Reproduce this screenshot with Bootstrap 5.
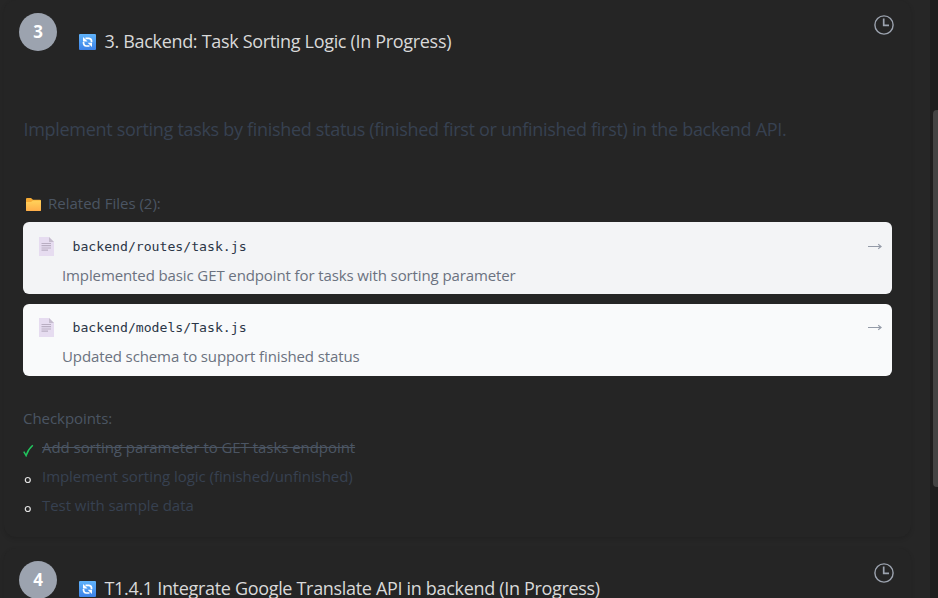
<!DOCTYPE html>
<html lang="en">
<head>
<meta charset="utf-8">
<title>Task timeline</title>
<link href="https://cdn.jsdelivr.net/npm/bootstrap@5.3.0/dist/css/bootstrap.min.css" rel="stylesheet">
<style>
html, body { height: 598px; overflow: hidden; }
body { background: #262626; font-family: "Open Sans", "Noto Sans", sans-serif; color: #d9d9d9; }
.timeline { width: 930px; height: 598px; }
.track { width: 8px; height: 598px; background: #1e1e1e; padding: 110px 0 0 3px; }
.thumb { width: 10px; height: 377px; background: #434343; border-radius: 4px; }
.task { width: 907px; margin-left: 4px; border-radius: 12px; background: #252525; box-shadow: 0 2px 4px rgba(0,0,0,.13); padding: 0 19px; }
.task-first { height: 537px; }
.task-next { height: 200px; margin-top: 11px; }
.task-head { height: 115px; padding-top: 13px; margin-left: -4px; }
.num { width: 38px; height: 38px; background: #9ca3af; color: #fff; font-weight: 700; font-size: 17px; flex: none; }
.task-title { font-size: 18px; line-height: 24px; margin: 16px 0 0 22px; letter-spacing: -.32px; white-space: nowrap; }
.task-next .task-title { margin-top: 15px; }
.task-title svg { margin: 2px 8.5px 0 0; flex: none; }
.clock { margin: 2px -2px 0 auto; flex: none; }
.desc { color: #374151; font-size: 18px; line-height: 28px; height: 76px; letter-spacing: -.31px; white-space: nowrap; padding-left: .5px; }
.label-row { color: #4b5563; font-size: 15px; line-height: 24px; }
.folder { margin: 2px 7px 0 3px; }
.file { width: 869px; height: 72px; border-radius: 6px; background: #f9fafb; padding: 11px 10px 0 16px; margin-bottom: 10px; }
.file-hot { background: #f3f4f6; padding-top: 12px; }
.files-label { margin-bottom: 7px; }
.file-row { height: 24px; }
.path { font-family: "DejaVu Sans Mono", monospace; font-size: 13.15px; line-height: 24px; color: #2b3647; margin-left: 18.5px; padding-top: 2px; }
.note { font-size: 15px; letter-spacing: -.11px; color: #6b7280; line-height: 24px; margin: 5px 0 0 23px; }
.checks { margin-top: 30px; letter-spacing: -.05px; }
.check { height: 29px; line-height: 24px; font-size: 15px; color: #374151; }
.check svg { margin: 9px 7px 0 0; flex: none; }
.check-label, .done { color: #4b5563; }
.done { text-decoration: line-through; }
</style>
</head>
<body>
<svg width="0" height="0" class="position-absolute">
  <defs>
    <linearGradient id="blue" x2="0" y2="1"><stop stop-color="#60b3fa"/><stop offset="1" stop-color="#3c82e8"/></linearGradient>
    <linearGradient id="gold" x2="0" y2="1"><stop stop-color="#ffd25a"/><stop offset="1" stop-color="#ffae4a"/></linearGradient>
    <symbol id="sync" viewBox="0 0 17 16"><rect width="17" height="16" rx="1" fill="url(#blue)"/><g fill="none" stroke="#fff" stroke-width="1.7"><path d="M6.5 4.4H10Q12.8 4.6 12.6 8.2"/><path d="M10.5 12H7.3Q4.4 11.8 4.5 8"/></g><path d="M4 3v4.4h4.6zM13 13V8.8H8.6z" fill="#fff"/></symbol>
    <symbol id="clock" viewBox="0 0 20 20"><circle cx="10" cy="10" r="9.1" fill="none" stroke="#9ca3af" stroke-width="1.4"/><path d="M9.7 3.5v6.8h5.3" fill="none" stroke="#9ca3af" stroke-width="1.7"/></symbol>
    <symbol id="folder" viewBox="0 0 15 13"><path d="M0 1q0-1 1-1h4l2 1.7h7q1 0 1 1V12q0 1-1 1H1q-1 0-1-1z" fill="#f5aa35"/><path d="M0 4h5l2-1.5h8V12q0 1-1 1H1q-1 0-1-1z" fill="url(#gold)"/></symbol>
    <symbol id="page" viewBox="0 0 15 19"><path d="M0 0h10l5 5v14H0z" fill="#e6dcf0"/><path d="M10 0v5h5z" fill="#c5bccd"/><path d="M2.5 6.5h9.5M2.5 8.7h9.5M2.5 11h9.5M2.5 13.2h6.5" stroke="#b9aec2" stroke-width="1.2"/></symbol>
    <symbol id="arrow" viewBox="0 0 14 8"><path d="M0 4.5h13M10.2 2.2l3 2.3-3 2.3" fill="none" stroke="#949ba8" stroke-width="1.1"/></symbol>
    <symbol id="tick" viewBox="0 0 12 13"><path d="M.8 7.6l2.3 4Q5 5.5 9.8 1.3" fill="none" stroke="#22c55e" stroke-width="1.5"/></symbol>
    <symbol id="ring" viewBox="0 0 12 13"><circle cx="4.8" cy="7" r="2.5" fill="none" stroke="#e4e4e4" stroke-width="1.2"/></symbol>
  </defs>
</svg>
<div class="d-flex">
  <main class="timeline overflow-hidden">
    <section class="task task-first">
      <div class="task-head d-flex align-items-start">
        <div class="num rounded-circle d-flex align-items-center justify-content-center">3</div>
        <div class="task-title d-flex align-items-center"><svg width="17" height="16"><use href="#sync"/></svg><span>3. Backend: Task Sorting Logic (In Progress)</span></div>
        <svg class="clock" width="20" height="20"><use href="#clock"/></svg>
      </div>
      <div class="desc">Implement sorting tasks by finished status (finished first or unfinished first) in the backend API.</div>
      <div class="label-row files-label d-flex align-items-center"><svg class="folder" width="15" height="13"><use href="#folder"/></svg><span>Related Files (2):</span></div>
      <div class="file file-hot">
        <div class="file-row d-flex align-items-center"><svg width="15" height="19"><use href="#page"/></svg><span class="path">backend/routes/task.js</span><svg class="ms-auto" width="14" height="8"><use href="#arrow"/></svg></div>
        <div class="note">Implemented basic GET endpoint for tasks with sorting parameter</div>
      </div>
      <div class="file">
        <div class="file-row d-flex align-items-center"><svg width="15" height="19"><use href="#page"/></svg><span class="path">backend/models/Task.js</span><svg class="ms-auto" width="14" height="8"><use href="#arrow"/></svg></div>
        <div class="note">Updated schema to support finished status</div>
      </div>
      <div class="checks">
        <div class="check check-label">Checkpoints:</div>
        <div class="check d-flex"><svg width="12" height="13"><use href="#tick"/></svg><span class="done">Add sorting parameter to GET tasks endpoint</span></div>
        <div class="check d-flex"><svg width="12" height="13"><use href="#ring"/></svg><span>Implement sorting logic (finished/unfinished)</span></div>
        <div class="check d-flex"><svg width="12" height="13"><use href="#ring"/></svg><span>Test with sample data</span></div>
      </div>
    </section>
    <section class="task task-next">
      <div class="task-head d-flex align-items-start">
        <div class="num rounded-circle d-flex align-items-center justify-content-center">4</div>
        <div class="task-title d-flex align-items-center"><svg width="17" height="16"><use href="#sync"/></svg><span>T1.4.1 Integrate Google Translate API in backend (In Progress)</span></div>
        <svg class="clock" width="20" height="20"><use href="#clock"/></svg>
      </div>
    </section>
  </main>
  <div class="track overflow-hidden"><div class="thumb"></div></div>
</div>
<script src="https://cdn.jsdelivr.net/npm/bootstrap@5.3.0/dist/js/bootstrap.bundle.min.js"></script>
</body>
</html>
